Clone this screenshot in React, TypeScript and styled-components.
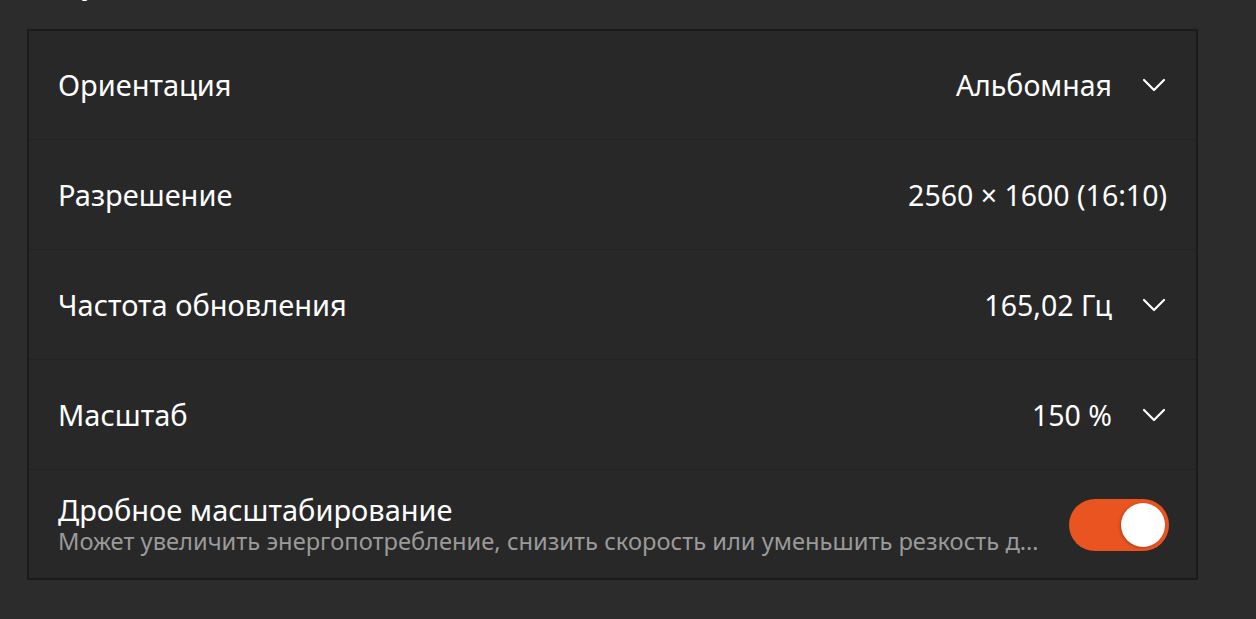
import styled, { createGlobalStyle } from "styled-components";

const GlobalStyle = createGlobalStyle`
  html, body {
    margin: 0;
    padding: 0;
    background: #2c2c2c;
    color: #ffffff;
    font-family: "Noto Sans", "Open Sans", sans-serif;
    overflow: hidden;
  }
`;

const StyledPage = styled.div`
  width: 1256px;
  height: 619px;
  padding: 0 58px 0 27px;
  box-sizing: border-box;
`;

const StyledHeading = styled.h2`
  margin: -35px 0 0 31px;
  height: 64px;
  font-size: 29px;
  font-weight: 700;
  line-height: 36px;
  white-space: nowrap;
`;

const StyledCard = styled.div`
  display: flex;
  flex-direction: column;
  width: 1171px;
  box-sizing: border-box;
  background: #282828;
  border: 2px solid #1b1b1b;
`;

const StyledRow = styled.div`
  display: flex;
  align-items: center;
  gap: 26px;
  height: 110px;
  padding: 0 29px 0 29px;
  box-sizing: border-box;
  & + & {
    border-top: 1px solid #222222;
  }
  &:first-child {
    height: 108px;
  }
  &:last-child {
    height: 109px;
  }
`;

const StyledLabels = styled.div`
  display: flex;
  flex-direction: column;
  flex: 1;
  min-width: 0;
`;

const StyledTitle = styled.span`
  font-size: 29px;
  line-height: 34px;
  white-space: nowrap;
`;

const StyledSubtitle = styled.span`
  font-size: 23.7px;
  line-height: 29px;
  color: #9a9a9a;
  white-space: nowrap;
  overflow: hidden;
  text-overflow: ellipsis;
`;

const StyledValue = styled.div`
  display: flex;
  align-items: center;
  gap: 29px;
  font-size: 28.5px;
  white-space: nowrap;
`;

const StyledSwitch = styled.button<{ $on: boolean }>`
  position: relative;
  flex: none;
  width: 100px;
  height: 52px;
  margin: 2px -2px 0 0;
  border: none;
  padding: 0;
  border-radius: 26px;
  background: ${({ $on }) => ($on ? "#e95420" : "#545454")};
  cursor: pointer;

  &::after {
    content: "";
    position: absolute;
    top: 4px;
    left: ${({ $on }) => ($on ? "52px" : "4px")};
    width: 44px;
    height: 44px;
    border-radius: 50%;
    background: #ffffff;
    box-shadow: -1px 1px 3px rgba(0, 0, 0, 0.25);
  }
`;

const Chevron = () => (
  <svg width="26" height="26" viewBox="0 0 26 26" fill="none">
    <path
      d="M3 8 L13 18 L23 8"
      stroke="#ffffff"
      strokeWidth="2.2"
      strokeLinecap="round"
      strokeLinejoin="round"
    />
  </svg>
);

type Setting = {
  label: string;
  value: string;
  dropdown: boolean;
};

const settings: Setting[] = [
  { label: "Ориентация", value: "Альбомная", dropdown: true },
  { label: "Разрешение", value: "2560 × 1600 (16:10)", dropdown: false },
  { label: "Частота обновления", value: "165,02 Гц", dropdown: true },
  { label: "Масштаб", value: "150 %", dropdown: true },
];

export default function App() {
  return (
    <>
      <GlobalStyle />
      <StyledPage>
        <StyledHeading>Предпочтения дисплея</StyledHeading>
        <StyledCard>
          {settings.map((s) => (
            <StyledRow key={s.label}>
              <StyledLabels>
                <StyledTitle>{s.label}</StyledTitle>
              </StyledLabels>
              <StyledValue>
                {s.value}
                {s.dropdown && <Chevron />}
              </StyledValue>
            </StyledRow>
          ))}
          <StyledRow>
            <StyledLabels>
              <StyledTitle>Дробное масштабирование</StyledTitle>
              <StyledSubtitle>
                Может увеличить энергопотребление, снизить скорость или
                уменьшить резкость дисплея.
              </StyledSubtitle>
            </StyledLabels>
            <StyledSwitch $on aria-label="Дробное масштабирование" />
          </StyledRow>
        </StyledCard>
      </StyledPage>
    </>
  );
}
